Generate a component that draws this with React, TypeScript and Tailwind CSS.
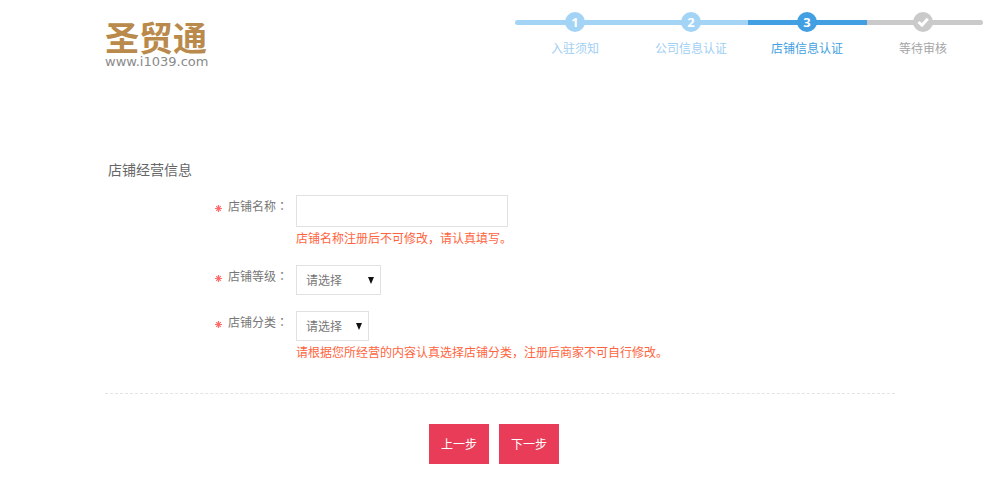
import type { ReactNode } from 'react'

type StepState = 'done' | 'current' | 'pending'

const steps: { label: string; state: StepState }[] = [
  { label: '入驻须知', state: 'done' },
  { label: '公司信息认证', state: 'done' },
  { label: '店铺信息认证', state: 'current' },
  { label: '等待审核', state: 'pending' },
]

const dotColor = {
  done: 'bg-[#a3d3f5]',
  current: 'bg-[#429fe1]',
  pending: 'bg-[#cacaca]',
}

const labelColor = {
  done: 'text-[#9fcff3]',
  current: 'text-[#429fe1]',
  pending: 'text-[#a5a5a5]',
}

function Logo() {
  return (
    <a href="#" className="flex flex-col">
      <span className="text-[34px] leading-[34px] font-bold text-[#b98a4b]">圣贸通</span>
      <span className="font-['DejaVu_Sans',sans-serif] text-[13px] leading-4 text-[#8a8a8a]">
        www.i1039.com
      </span>
    </a>
  )
}

function Stepper() {
  return (
    <nav className="relative w-[468px] pt-3">
      {/* Track behind the dots */}
      <div className="absolute inset-x-0 top-5 flex h-[5px] overflow-hidden rounded-full">
        <div className="flex-[233] bg-[#a3d3f5]" />
        <div className="flex-[119] bg-[#429fe1]" />
        <div className="flex-[116] bg-[#cacaca]" />
      </div>
      <ol className="relative grid grid-cols-4 px-[2px]">
        {steps.map((step, index) => (
          <li key={step.label} className="flex flex-col items-center gap-[6px]">
            <span
              className={`flex size-5 items-center justify-center rounded-full font-['Open_Sans',sans-serif] text-[13px] leading-5 font-bold text-white ${dotColor[step.state]}`}
            >
              {step.state === 'pending' ? (
                <svg viewBox="0 0 20 20" className="size-5" fill="none" stroke="currentColor" strokeWidth="3">
                  <path d="M5.5 10 L9 13.2 L14.8 6.8" />
                </svg>
              ) : (
                index + 1
              )}
            </span>
            <span className={`text-xs leading-5 ${labelColor[step.state]}`}>{step.label}</span>
          </li>
        ))}
      </ol>
    </nav>
  )
}

function Field({ id, label, hint, children }: { id: string; label: string; hint?: string; children: ReactNode }) {
  return (
    <div className="flex gap-2">
      <label htmlFor={id} className="flex h-[22px] w-[183px] items-center justify-end gap-[6px] text-[#777]">
        <svg viewBox="0 0 7 7" className="mt-1 size-[7px]" stroke="#ff6a6a" strokeWidth="1.2">
          <path d="M3.5 0V7M0 3.5H7M1.2 1.2L5.8 5.8M5.8 1.2L1.2 5.8" />
        </svg>
        <span>
          {label}
          <span className="font-['Noto_Sans_CJK_TC',sans-serif]" lang="zh-TW">
            ：
          </span>
        </span>
      </label>
      <div>
        {children}
        {hint && <p className="leading-[22px] text-[#ff6440]">{hint}</p>}
      </div>
    </div>
  )
}

function Select({ id, width }: { id: string; width: string }) {
  return (
    <div className={`relative ${width}`}>
      <select
        id={id}
        className="block h-[30px] w-full appearance-none border border-[#e1e1e1] bg-white pl-[9px] text-xs text-[#777]"
      >
        <option>请选择</option>
      </select>
      <svg viewBox="0 0 6 7" className="pointer-events-none absolute top-3 right-[7px] h-[7px] w-[6px]" fill="#111">
        <path d="M0 0H6L3 7Z" />
      </svg>
    </div>
  )
}

export default function App() {
  return (
    <div className="bg-white font-['Noto_Sans_CJK_SC',sans-serif] text-xs">
      <header className="flex items-start justify-between pr-[17px] pl-[105px]">
        <div className="pt-5">
          <Logo />
        </div>
        <Stepper />
      </header>

      <main className="mx-auto mt-[84px] max-w-[790px]">
        <form onSubmit={(e) => e.preventDefault()}>
          <h1 className="pl-[3px] text-sm leading-[30px] text-[#666]">店铺经营信息</h1>

          <div className="mt-[11px] flex flex-col gap-4 border-b border-dashed border-[#e4e4e4] pb-[30px]">
            <Field id="shop-name" label="店铺名称" hint="店铺名称注册后不可修改，请认真填写。">
              <input id="shop-name" type="text" className="block h-8 w-[212px] border border-[#e1e1e1] px-2" />
            </Field>
            <Field id="shop-level" label="店铺等级">
              <Select id="shop-level" width="w-[85px]" />
            </Field>
            <Field
              id="shop-category"
              label="店铺分类"
              hint="请根据您所经营的内容认真选择店铺分类，注册后商家不可自行修改。"
            >
              <Select id="shop-category" width="w-[73px]" />
            </Field>
          </div>

          <div className="mt-[30px] flex justify-center gap-[10px] pr-3">
            <button type="button" className="h-10 w-[60px] bg-[#e83c59] text-white">
              上一步
            </button>
            <button type="submit" className="h-10 w-[60px] bg-[#e83c59] text-white">
              下一步
            </button>
          </div>
        </form>
      </main>
    </div>
  )
}
